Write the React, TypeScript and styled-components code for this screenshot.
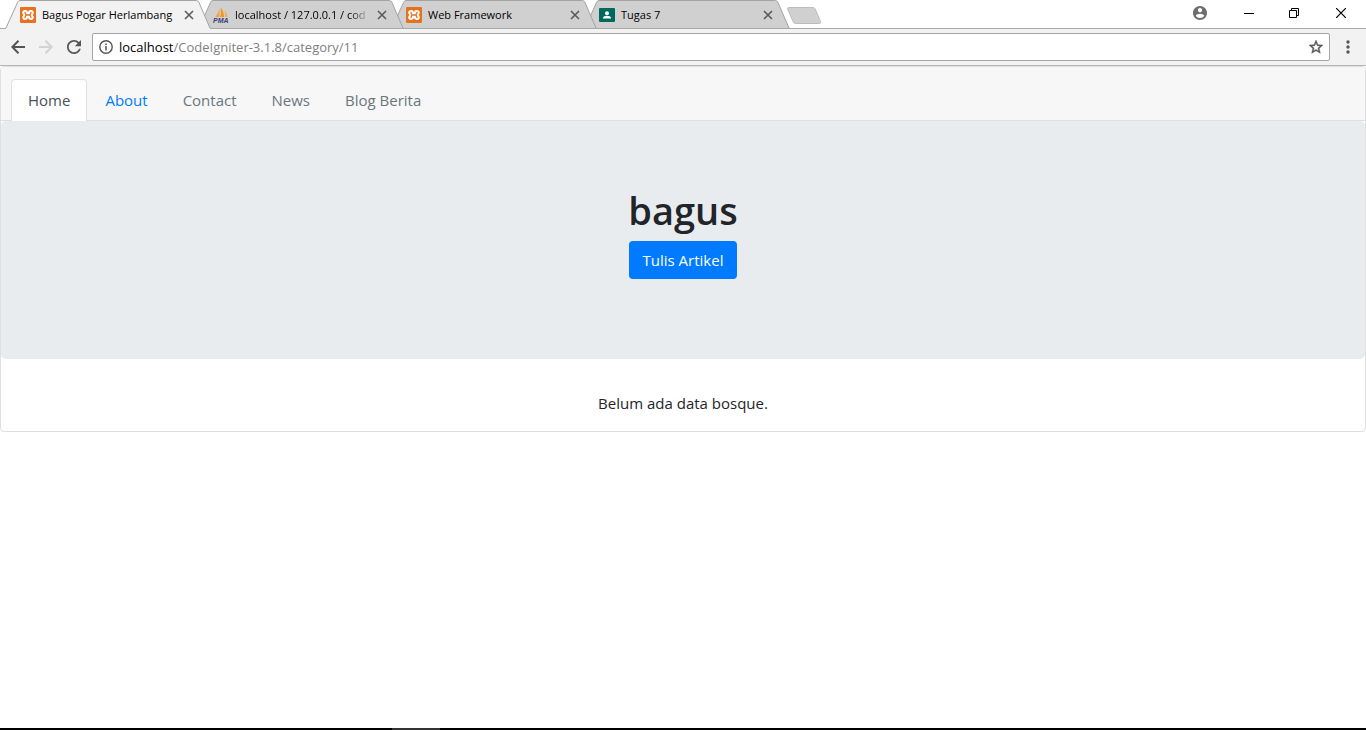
import React from "react";
import styled, { createGlobalStyle } from "styled-components";

const GlobalStyle = createGlobalStyle`
  *, *::before, *::after { box-sizing: border-box; }
  html, body, #root { height: 100%; }
  body {
    margin: 0;
    background: #fff;
    color: #212529;
    font: 15px/24px "Open Sans", "Noto Sans", sans-serif;
  }
  button, input { font-family: inherit; }
  svg { display: block; flex: none; }
`;

const Window = styled.div`
  display: flex;
  flex-direction: column;
  min-height: 100%;
`;

const TitleBar = styled.header`
  display: flex;
  align-items: flex-start;
  height: 29px;
  padding-left: 5px;
  border-bottom: 1px solid #a9a9a9;
`;

const TabShell = styled.div<{ $order: number; $active?: boolean }>`
  position: relative;
  z-index: ${(p) => p.$order};
  display: flex;
  align-items: center;
  width: 206px;
  height: 28px;
  margin-right: -13px;
  padding: 2px 14px 0 15px;
  flex: none;
`;

const TabShape = styled.svg`
  position: absolute;
  inset: 0;
  z-index: -1;
`;

const TabTitle = styled.span`
  flex: 1;
  min-width: 0;
  margin: 0 4px 0 6px;
  overflow: hidden;
  white-space: nowrap;
  color: #000;
  font-size: 11px;
  line-height: 16px;
`;

const FadedTabTitle = styled(TabTitle)`
  mask-image: linear-gradient(to right, #000 calc(100% - 20px), transparent);
`;

const IconButton = styled.button<{ $width: number; $height: number }>`
  display: flex;
  align-items: center;
  justify-content: center;
  flex: none;
  width: ${(p) => p.$width}px;
  height: ${(p) => p.$height}px;
  padding: 0;
  border: 0;
  background: none;
`;

const NewTab = styled(IconButton)`
  margin: 6px 0 0 9px;
`;

const WindowControls = styled.div`
  display: flex;
  margin-left: auto;
`;

const Toolbar = styled.div`
  display: flex;
  align-items: center;
  height: 37px;
  padding: 0 4px;
  background: #f2f2f2;
  border-bottom: 1px solid #b6b6b6;
`;

const AddressBar = styled.label`
  display: flex;
  align-items: center;
  flex: 1;
  height: 28px;
  margin: 0 4px;
  padding: 0 6px;
  background: #fff;
  border: 1px solid #a6a6a6;
  border-radius: 2px;
`;

const AddressField = styled.div`
  position: relative;
  flex: 1;
  margin: 0 6px;
`;

const AddressInput = styled.input`
  display: block;
  width: 100%;
  height: 20px;
  padding: 0;
  border: 0;
  outline: 0;
  background: none;
  color: transparent;
  caret-color: #000;
  font-size: 13px;
  line-height: 20px;
`;

const AddressText = styled.span`
  position: absolute;
  inset: 0;
  pointer-events: none;
  color: #808080;
  font-size: 13px;
  line-height: 20px;
  white-space: nowrap;

  b {
    color: #000;
    font-weight: 400;
  }
`;

const Card = styled.main`
  border: 1px solid #dfdfdf;
  border-radius: 4px;
`;

const CardHeader = styled.nav`
  padding: 12px 10px 0;
  background: #f7f7f7;
  border-bottom: 1px solid #dfdfdf;
  border-radius: 3px 3px 0 0;
`;

const NavList = styled.ul`
  display: flex;
  gap: 1px;
  margin: 0 0 -1px;
  padding: 0;
  list-style: none;
`;

const NavLink = styled.a<{ $tone: "active" | "link" | "muted" }>`
  display: block;
  padding: 8px 16px 9px;
  border: 1px solid transparent;
  border-bottom: 0;
  border-radius: 4px 4px 0 0;
  text-decoration: none;
  color: ${(p) =>
    p.$tone === "active" ? "#495057" : p.$tone === "link" ? "#007bff" : "#6c757d"};
  ${(p) => p.$tone === "active" && "background: #fff; border-color: #dee2e6;"}
`;

const Hero = styled.section`
  display: flex;
  flex-direction: column;
  align-items: center;
  gap: 6px;
  padding: 64px 32px 80px;
  background: #e9ecef;
  border-radius: 5px;
`;

const HeroTitle = styled.h1`
  margin: 0;
  font-size: 38px;
  font-weight: 600;
  line-height: 50px;
`;

const PrimaryButton = styled.button`
  height: 38px;
  padding: 0 14px;
  border: 0;
  border-radius: 4px;
  background: #007bff;
  color: #fff;
  font-size: 15px;
  line-height: 24px;
`;

const EmptyMessage = styled.p`
  margin: 0;
  padding: 32px 20px 16px;
  text-align: center;
`;

const Taskbar = styled.footer`
  display: flex;
  height: 2px;
  margin-top: auto;
  padding-left: 392px;
  background: #000;
`;

const TaskbarItem = styled.div`
  width: 48px;
  background: #333;
`;

const XamppIcon = () => (
  <svg width="16" height="16" viewBox="0 0 16 16">
    <rect width="16" height="16" rx="1" fill="#e8711c" />
    <path
      d="M5 3C3.400 3 2.200 4.100 2.200 5.600c0 1 .5 1.700 1.100 2.400-.7.700-1.100 1.400-1.100 2.400C2.200 11.900 3.400 13 5 13c1.200 0 2-.7 3-.7s1.800.7 3 .7c1.600 0 2.800-1.100 2.800-2.600 0-1-.4-1.700-1.100-2.400.6-.7 1.100-1.400 1.100-2.400C13.800 4.100 12.600 3 11 3c-1.200 0-2 .7-3 .7S6.200 3 5 3Z"
      fill="#fff"
    />
    <path
      d="M5 5.400 6 8 5 10.600M11 5.400 10 8l1 2.600M6 8h4"
      fill="none"
      stroke="#e8711c"
      strokeWidth="1.300"
      strokeLinecap="round"
    />
    <path d="M8 2.800v1.700M8 11.500v1.700" stroke="#e8711c" strokeWidth="1.500" />
  </svg>
);

const PmaIcon = () => (
  <svg width="16" height="16" viewBox="0 0 16 16">
    <path d="M6.500 1.200V10H2.300C4 7.600 5.500 5 6.500 1.200Z" fill="#f0a344" />
    <path d="M7.500.5c2.300 2.300 3.500 5.500 3.500 9.500H7.200c.8-3 .9-6 .3-9.500Z" fill="#f7931e" />
    <path d="M11.600 3.500c1.500 1.600 2.500 4 2.900 6.500h-2.700c.3-2.200.2-4.500-.2-6.500Z" fill="#f0b060" />
    <text
      x="0"
      y="15.500"
      fill="#3b3e73"
      fontFamily="Liberation Sans, sans-serif"
      fontSize="7"
      fontStyle="italic"
      fontWeight="700"
    >
      PMA
    </text>
  </svg>
);

const ClassroomIcon = () => (
  <svg width="16" height="16" viewBox="0 0 16 16">
    <rect y="1" width="16" height="14" rx="1" fill="#00695c" />
    <circle cx="8" cy="6.300" r="2" fill="#fff" />
    <path d="M4 11.500V11c0-1.400 2.200-2.200 4-2.200s4 .8 4 2.200v.5Z" fill="#fff" />
  </svg>
);

type Tab = { title: string; icon: React.ReactNode; active?: boolean; long?: boolean };

const tabs: Tab[] = [
  { title: "Bagus Pogar Herlambang", icon: <XamppIcon />, active: true },
  { title: "localhost / 127.0.0.1 / cod", icon: <PmaIcon />, long: true },
  { title: "Web Framework", icon: <XamppIcon /> },
  { title: "Tugas 7", icon: <ClassroomIcon /> },
];

const navItems: { label: string; tone: "active" | "link" | "muted" }[] = [
  { label: "Home", tone: "active" },
  { label: "About", tone: "link" },
  { label: "Contact", tone: "muted" },
  { label: "News", tone: "muted" },
  { label: "Blog Berita", tone: "muted" },
];

const BrowserTab = ({ title, icon, active, long, order }: Tab & { order: number }) => {
  const Title = long ? FadedTabTitle : TabTitle;
  return (
    <TabShell $order={order} $active={active}>
      <TabShape width="206" height="29" viewBox="0 0 206 29">
        <path
          d="M0 29 1 28 12.500 2.500Q13.300.5 15 .5H191.500Q193 .5 194 2.500L205 28 206 29Z"
          fill={active ? "#f2f2f2" : "#d0d0d0"}
        />
        <path
          d="M0 28.500 1 28 12.500 2.500Q13.300.5 15 .5H191.500Q193 .5 194 2.500L205 28 206 28.500"
          fill="none"
          stroke="#a3a3a3"
        />
        {!active && <path d="M0 28.500H206" stroke="#a9a9a9" />}
      </TabShape>
      {icon}
      <Title>{title}</Title>
      <IconButton $width={16} $height={16} aria-label={`Close ${title}`}>
        <svg width="10" height="10" viewBox="0 0 10 10">
          <path d="m1 1 8 8M9 1 1 9" stroke="#5a5a5a" strokeWidth="1.600" />
        </svg>
      </IconButton>
    </TabShell>
  );
};

export default function App() {
  const [address, setAddress] = React.useState("localhost/CodeIgniter-3.1.8/category/11");
  const slash = address.indexOf("/");
  const host = slash < 0 ? address : address.slice(0, slash);

  return (
    <Window>
      <GlobalStyle />
      <TitleBar>
        {tabs.map((tab, i) => (
          <BrowserTab key={tab.title} {...tab} order={tabs.length - i} />
        ))}
        <NewTab $width={36} $height={19} aria-label="New tab">
          <svg width="36" height="19" viewBox="0 0 36 19">
            <path
              d="M3 1.500H27Q28.500 1.500 29.200 3L34.500 15.500Q35.200 17.500 33.500 17.500H9.500Q8 17.500 7.300 16L1.800 3.500Q1 1.500 3 1.500Z"
              fill="#d0d0d0"
              stroke="#bcbcbc"
            />
          </svg>
        </NewTab>
        <WindowControls>
          <IconButton $width={52} $height={26} aria-label="Profile">
            <svg width="14" height="14" viewBox="2 2 20 20">
              <path
                fill="#6e6e6e"
                d="M12 2C6.480 2 2 6.480 2 12s4.480 10 10 10 10-4.480 10-10S17.520 2 12 2zm0 3c1.660 0 3 1.340 3 3s-1.340 3-3 3-3-1.340-3-3 1.340-3 3-3zm0 14.200c-2.500 0-4.710-1.280-6-3.220.03-1.990 4-3.080 6-3.080 1.990 0 5.970 1.090 6 3.080-1.290 1.940-3.500 3.220-6 3.220z"
              />
            </svg>
          </IconButton>
          <IconButton $width={46} $height={26} aria-label="Minimize">
            <svg width="10" height="10" viewBox="0 0 10 10">
              <path d="M0 5.500h10" stroke="#000" />
            </svg>
          </IconButton>
          <IconButton $width={44} $height={26} aria-label="Restore">
            <svg width="10" height="10" viewBox="0 0 10 10">
              <path d="M.5 2.500h7v7h-7ZM2.500 2.500v-2h7v7h-2" fill="none" stroke="#000" />
            </svg>
          </IconButton>
          <IconButton $width={50} $height={26} aria-label="Close">
            <svg width="10" height="10" viewBox="0 0 10 10">
              <path d="m0 0 10 10M10 0 0 10" stroke="#000" strokeWidth="1.200" />
            </svg>
          </IconButton>
        </WindowControls>
      </TitleBar>

      <Toolbar>
        <IconButton $width={28} $height={28} aria-label="Back">
          <svg width="14" height="14" viewBox="0 0 14 14">
            <path d="M14 7H1.500M7.500.8 1.300 7l6.200 6.200" fill="none" stroke="#555" strokeWidth="2" />
          </svg>
        </IconButton>
        <IconButton $width={28} $height={28} aria-label="Forward" disabled>
          <svg width="14" height="14" viewBox="0 0 14 14">
            <path d="M0 7h12.500M6.500.8 12.700 7l-6.200 6.200" fill="none" stroke="#d2d2d2" strokeWidth="2" />
          </svg>
        </IconButton>
        <IconButton $width={28} $height={28} aria-label="Reload">
          <svg width="14" height="14" viewBox="4 4 16 16">
            <path
              fill="#555"
              d="M17.650 6.350C16.200 4.900 14.210 4 12 4c-4.420 0-7.990 3.580-7.990 8s3.570 8 7.990 8c3.730 0 6.840-2.550 7.730-6h-2.080c-.82 2.330-3.040 4-5.650 4-3.310 0-6-2.690-6-6s2.690-6 6-6c1.660 0 3.140.69 4.220 1.780L13 11h7V4l-2.350 2.350z"
            />
          </svg>
        </IconButton>
        <AddressBar>
          <svg width="14" height="14" viewBox="0 0 14 14">
            <circle cx="7" cy="7" r="6.200" fill="none" stroke="#555" strokeWidth="1.400" />
            <path d="M7 6v4.500M7 3.500v1.500" stroke="#555" strokeWidth="1.500" />
          </svg>
          <AddressField>
            <AddressInput
              aria-label="Address"
              value={address}
              spellCheck={false}
              onChange={(e) => setAddress(e.target.value)}
            />
            <AddressText aria-hidden>
              <b>{host}</b>
              {address.slice(host.length)}
            </AddressText>
          </AddressField>
          <svg width="14" height="14" viewBox="2 2 20 20">
            <path
              fill="#555"
              stroke="#555"
              strokeWidth="0.600"
              d="M22 9.240l-7.190-.62L12 2 9.190 8.630 2 9.240l5.460 4.730L5.820 21 12 17.270 18.180 21l-1.630-7.030L22 9.240zM12 15.400l-3.760 2.270 1-4.280-3.320-2.880 4.380-.38L12 6.100l1.710 4.040 4.380.38-3.320 2.880 1 4.280L12 15.400z"
            />
          </svg>
        </AddressBar>
        <IconButton $width={28} $height={28} aria-label="Menu">
          <svg width="4" height="14" viewBox="0 0 4 14">
            <circle cx="2" cy="2" r="1.700" fill="#555" />
            <circle cx="2" cy="7" r="1.700" fill="#555" />
            <circle cx="2" cy="12" r="1.700" fill="#555" />
          </svg>
        </IconButton>
      </Toolbar>

      <Card>
        <CardHeader>
          <NavList>
            {navItems.map((item) => (
              <li key={item.label}>
                <NavLink href="#" $tone={item.tone}>
                  {item.label}
                </NavLink>
              </li>
            ))}
          </NavList>
        </CardHeader>
        <Hero>
          <HeroTitle>bagus</HeroTitle>
          <PrimaryButton>Tulis Artikel</PrimaryButton>
        </Hero>
        <EmptyMessage>Belum ada data bosque.</EmptyMessage>
      </Card>

      <Taskbar>
        <TaskbarItem />
      </Taskbar>
    </Window>
  );
}
